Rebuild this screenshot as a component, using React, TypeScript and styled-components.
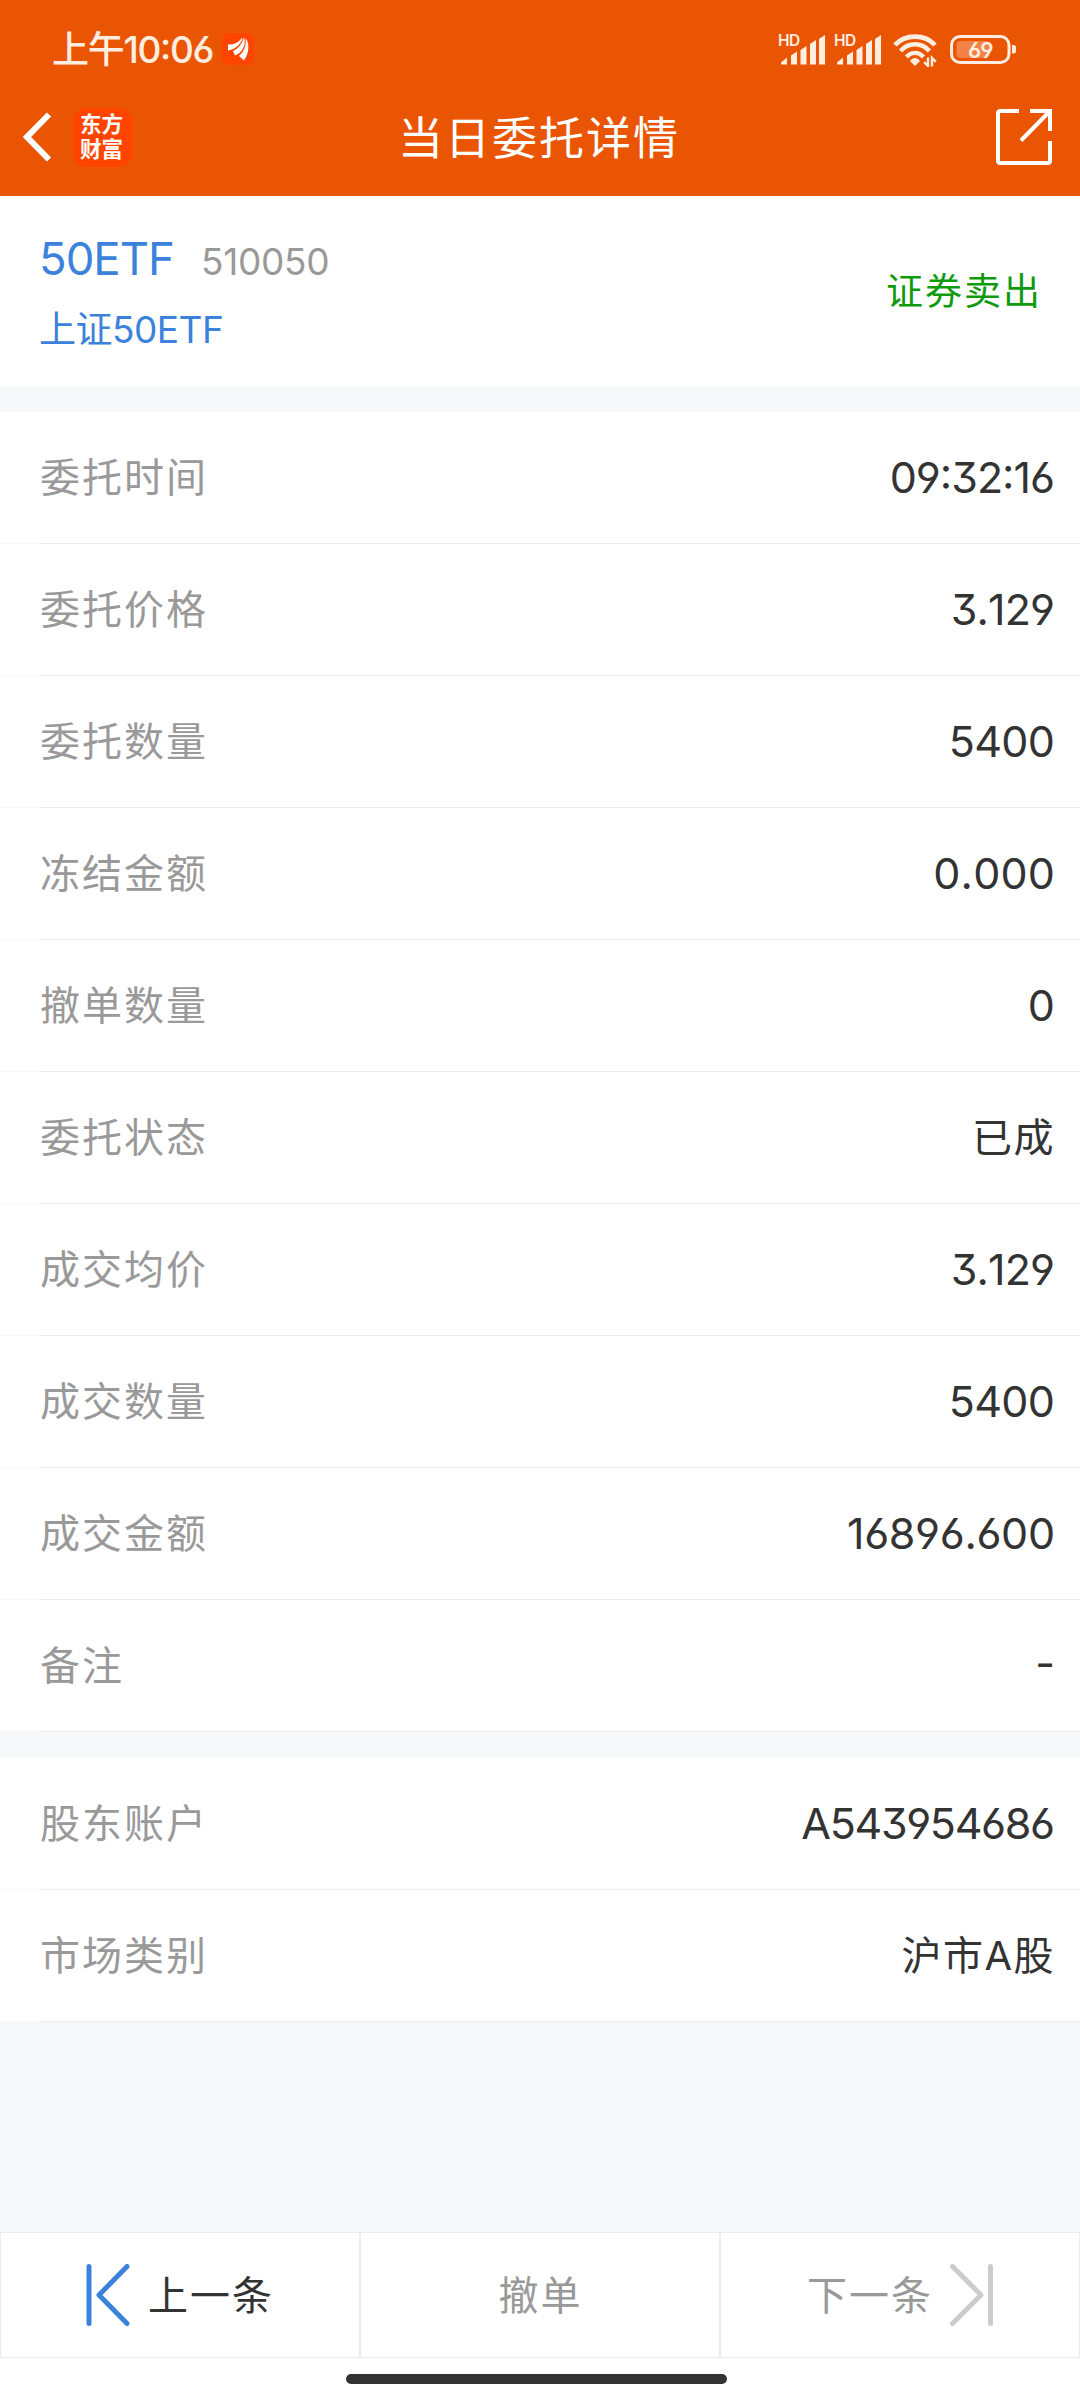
import React from "react";
import styled, { createGlobalStyle } from "styled-components";

const family = `Inter, "Noto Sans CJK SC", sans-serif`;

const GlobalStyle = createGlobalStyle`
  * { box-sizing: border-box; }
  body {
    margin: 0;
    background: #f6f8fa;
    font-family: ${family};
    font-feature-settings: "cv03", "cv04", "cv09", "case";
  }
`;

const Screen = styled.div`
  width: 1080px;
  height: 2400px;
  display: flex;
  flex-direction: column;
  background: #f6f8fa;
`;

const Top = styled.header`
  height: 196px;
  flex: none;
  background: #ea5504;
  color: #fff;
`;

const StatusBar = styled.div`
  height: 98px;
  padding: 0 62px 0 52px;
  display: flex;
  justify-content: space-between;
  align-items: center;
`;

const StatusSide = styled.div`
  display: flex;
  align-items: center;
`;

const Clock = styled.span`
  width: 170px;
  padding-top: 2px;
  font-size: 37px;
  line-height: 50px;
  font-weight: 500;
  color: #ffeee0;
  letter-spacing: -1.3px;
  white-space: nowrap;
`;

const SignalIcon = styled.svg`
  width: 48px;
  height: 36px;
  margin-right: 8px;
`;

const WifiIcon = styled.svg`
  width: 46px;
  height: 36px;
  margin: 0 12px 0 2px;
`;

const NavBar = styled.div`
  height: 78px;
  padding: 0 28px 0 23px;
  display: grid;
  grid-template-columns: 1fr auto 1fr;
  align-items: center;
`;

const NavLeft = styled.div`
  display: flex;
  align-items: center;
  gap: 21px;
`;

const BrandTile = styled.div`
  width: 59px;
  height: 59px;
  padding: 2px 0 0 7px;
  border-radius: 13px;
  background: #ff4400;
`;

const BrandText = styled.div`
  width: 44px;
  font: 700 21.500px/25px "Noto Sans CJK SC", sans-serif;
`;

const Title = styled.h1`
  margin: 0;
  padding: 3px 0 0 3px;
  font-size: 45px;
  line-height: 60px;
  font-weight: 400;
  letter-spacing: 2px;
`;

const NavRight = styled.div`
  display: flex;
  justify-content: flex-end;
`;

const Summary = styled.section`
  height: 190px;
  flex: none;
  padding: 0 38px 0 39px;
  background: #fff;
  display: flex;
  justify-content: space-between;
  align-items: center;
`;

const Security = styled.div`
  padding-top: 3px;
`;

const NameLine = styled.div`
  display: flex;
  align-items: baseline;
  gap: 27px;
  height: 71px;
`;

const Name = styled.span`
  font-size: 45.500px;
  line-height: 62px;
  letter-spacing: -1px;
  color: #3b82db;
`;

const Code = styled.span`
  font-size: 37px;
  letter-spacing: -0.3px;
  color: #999;
`;

const FullName = styled.div`
  padding-top: 3px;
  font-size: 37px;
  line-height: 56px;
  letter-spacing: -0.5px;
  color: #3b82db;
`;

const Side = styled.div`
  padding-top: 2px;
  font-size: 37px;
  line-height: 50px;
  letter-spacing: 2px;
  color: #0f9a0f;
`;

const Group = styled.section`
  margin-top: 26px;
  flex: none;
`;

const Row = styled.div`
  height: 132px;
  padding-left: 39px;
  display: flex;
  background: linear-gradient(#fff, #fff) 0 0 / 100% 131px no-repeat;
`;

const RowBody = styled.div`
  flex: 1;
  padding: 0 25px 2px 1px;
  border-bottom: 1px solid #ececec;
  display: flex;
  align-items: center;
  justify-content: space-between;
`;

const Label = styled.span`
  padding-top: 2px;
  font-size: 40px;
  line-height: 60px;
  letter-spacing: 2px;
  color: #999;
`;

const Value = styled.span<{ $text?: boolean; $track: number }>`
  padding-top: ${(p) => (p.$text ? 2 : 0)}px;
  margin-right: ${(p) => (p.$text ? 0 : -p.$track)}px;
  font-size: ${(p) => (p.$text ? 40 : 43)}px;
  font-kerning: none;
  line-height: 60px;
  letter-spacing: ${(p) => p.$track}px;
  color: #333;
`;

const Footer = styled.footer`
  margin-top: auto;
  height: 168px;
  flex: none;
  background: #fff;
`;

const Actions = styled.div`
  display: grid;
  grid-template-columns: repeat(3, 360px);
  height: 126px;
`;

const Action = styled.button<{ $muted?: boolean }>`
  font: 400 40px/60px ${family};
  letter-spacing: 2px;
  border: 1px solid #ececec;
  background: #fff;
  padding: 0;
  display: flex;
  align-items: center;
  justify-content: center;
  gap: 17px;
  color: ${(p) => (p.$muted ? "#999" : "#333")};
`;

const ActionText = styled.span`
  padding: 2px 0 0 1px;
`;

const HomeBar = styled.div`
  width: 381px;
  height: 10px;
  border-radius: 5px;
  background: #333;
  margin: 16px 0 0 346px;
`;

const NotifyIcon = () => (
  <svg width="32" height="32" viewBox="0 0 32 32">
    <rect width="32" height="32" rx="7" fill="#ff4400" />
    <path fill="#fff" d="M6 11.500C12 12 17 9 20 5C20 5 21 5 20.500 6C18 12 12 17 6 17.500ZM11 18C16 16 20 11 22 4.500C24.500 12 20 20 13 22.500ZM17 23C22 19 24.500 12 23.500 5C28 10 27 21 22 27.500Z" />
  </svg>
);

const Signal = () => (
  <SignalIcon viewBox="0 -2 48 36" fill="#ffeee0">
    <text x="0" y="13.300" fontFamily="Inter, sans-serif" fontWeight="600" fontSize="15.500" letterSpacing="-0.500">HD</text>
    <path d="M3 31.500v-2l6-5V31.500zM13 31.500V22.500l6-4V31.500zM22.500 31.500V17l6-4V31.500zM32 31.500V11l6-4V31.500zM41 31.500V6l6-4V31.500z" />
  </SignalIcon>
);

const Wifi = () => (
  <WifiIcon viewBox="0 -1.500 46 36" fill="none" stroke="#ffeee0">
    <path d="M3 12.500C13 1.300 33 1.300 43 12.500" strokeWidth="4.800" />
    <path d="M8.500 18.500C16.500 9.500 29.500 9.500 37.500 18.500M14.500 24.500C19.500 19 26.500 19 31.500 24.500" strokeWidth="4.400" />
    <path d="M18 28.500c3-4 7-4 10 0l-5 5z" fill="#ffeee0" stroke="none" />
    <path d="M36 25v8.500l-3.800-3.800M40 34v-8.500l3.800 3.800" strokeWidth="2.400" />
  </WifiIcon>
);

const Battery = () => (
  <svg width="68" height="30" viewBox="0 -1 68 30">
    <rect x="1.500" y="1.500" width="57.500" height="26" rx="8.500" fill="none" stroke="#ffeee0" strokeWidth="3" />
    <rect x="6.500" y="6" width="33" height="17" rx="4" fill="#f38246" />
    <path d="M62 10h1.500q2.500 0 2.500 2.500v3.500q0 2.500-2.500 2.500H62z" fill="#ffeee0" />
    <text x="30.500" y="22.500" textAnchor="middle" fill="#ffeee0" fontFamily="Inter, sans-serif" fontWeight="600" fontSize="22" letterSpacing="-0.500">69</text>
  </svg>
);

const Back = () => (
  <svg width="29" height="50" viewBox="0 0 29 50">
    <path d="M26 2.500L4 25L26 47.500" fill="none" stroke="#fff" strokeWidth="6" />
  </svg>
);

const Share = () => (
  <svg width="56" height="56" viewBox="0 0 56 56" fill="none" stroke="#fff" strokeWidth="4">
    <path d="M23 2H4.500Q2 2 2 4.500V51.500Q2 54 4.500 54H51.500Q54 54 54 51.500V32" />
    <path d="M34 2H54V22M53 3L25 31.500" />
  </svg>
);

const StepIcon = ({ forward = false }: { forward?: boolean }) => (
  <svg width="44" height="62" viewBox="0 0 44 62" fill="none" stroke={forward ? "#ccc" : "#3b82db"} strokeWidth="5" strokeLinecap="round" strokeLinejoin="round">
    <path d={forward ? "M2.500 2.500L31 31L2.500 59.500M40.500 2.500V59.500" : "M3 2.500V59.500M41 2.500L13 31L41 59.500"} />
  </svg>
);

type Entry = { label: string; value: string; track: number; text?: boolean };

const order: Entry[] = [
  { label: "委托时间", value: "09:32:16", track: -1 },
  { label: "委托价格", value: "3.129", track: -0.9 },
  { label: "委托数量", value: "5400", track: -0.6 },
  { label: "冻结金额", value: "0.000", track: 0.2 },
  { label: "撤单数量", value: "0", track: 0 },
  { label: "委托状态", value: "已成", track: 1.5, text: true },
  { label: "成交均价", value: "3.129", track: -0.9 },
  { label: "成交数量", value: "5400", track: -0.6 },
  { label: "成交金额", value: "16896.600", track: -0.35 },
  { label: "备注", value: "-", track: 0 },
];

const account: Entry[] = [
  { label: "股东账户", value: "A543954686", track: -1.35 },
  { label: "市场类别", value: "沪市A股", track: 1.5, text: true },
];

const Rows = ({ items }: { items: Entry[] }) => (
  <Group>
    {items.map(({ label, value, track, text }) => (
      <Row key={label}>
        <RowBody>
          <Label>{label}</Label>
          <Value $text={text} $track={track}>{value}</Value>
        </RowBody>
      </Row>
    ))}
  </Group>
);

export default function App() {
  return (
    <Screen>
      <GlobalStyle />
      <Top>
        <StatusBar>
          <StatusSide>
            <Clock>上午10:06</Clock>
            <NotifyIcon />
          </StatusSide>
          <StatusSide>
            <Signal />
            <Signal />
            <Wifi />
            <Battery />
          </StatusSide>
        </StatusBar>
        <NavBar>
          <NavLeft>
            <Back />
            <BrandTile>
              <BrandText>东方财富</BrandText>
            </BrandTile>
          </NavLeft>
          <Title>当日委托详情</Title>
          <NavRight>
            <Share />
          </NavRight>
        </NavBar>
      </Top>
      <Summary>
        <Security>
          <NameLine>
            <Name>50ETF</Name>
            <Code>510050</Code>
          </NameLine>
          <FullName>上证50ETF</FullName>
        </Security>
        <Side>证券卖出</Side>
      </Summary>
      <Rows items={order} />
      <Rows items={account} />
      <Footer>
        <Actions>
          <Action>
            <StepIcon />
            <ActionText>上一条</ActionText>
          </Action>
          <Action $muted>
            <ActionText>撤单</ActionText>
          </Action>
          <Action $muted>
            <ActionText>下一条</ActionText>
            <StepIcon forward />
          </Action>
        </Actions>
        <HomeBar />
      </Footer>
    </Screen>
  );
}
